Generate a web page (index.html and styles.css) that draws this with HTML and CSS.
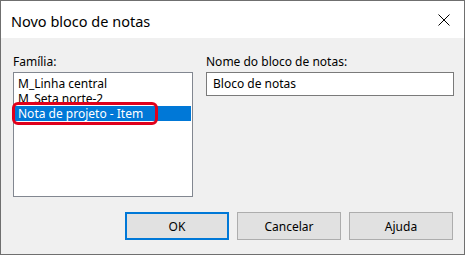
FILE: index.html
```html
<!DOCTYPE html>
<html lang="pt">
<head>
<meta charset="utf-8">
<title>Novo bloco de notas</title>
<link rel="stylesheet" href="styles.css">
</head>
<body>
<div class="window">
  <div class="titlebar">
    <span class="title">Novo bloco de notas</span>
    <svg class="close" width="12" height="12" viewBox="0 0 12 12" aria-hidden="true">
      <path d="M0.5 0.5 L11.5 11.5 M11.5 0.5 L0.5 11.5" stroke="#000" stroke-width="1" fill="none"/>
    </svg>
  </div>
  <div class="body">
    <div class="fields">
      <div class="col">
        <div class="label">Família:</div>
        <div class="listbox">
          <div class="item">M_Linha central</div>
          <div class="item">M_Seta norte-2</div>
          <div class="item selected">Nota de projeto - Item</div>
          <div class="ring"></div>
        </div>
      </div>
      <div class="col">
        <div class="label">Nome do bloco de notas:</div>
        <div class="textbox">Bloco de notas</div>
      </div>
    </div>
    <div class="buttons">
      <div class="button default">OK</div>
      <div class="button">Cancelar</div>
      <div class="button">Ajuda</div>
    </div>
  </div>
</div>
</body>
</html>
```
FILE: styles.css
```css
html, body {
  margin: 0;
  padding: 0;
  background: #ffffff;
}
body {
  font-family: "Noto Sans", "Open Sans", sans-serif;
  font-size: 12px;
  color: #000;
}
.window {
  width: 463px;
  height: 253px;
  border: 1px solid #6f6f6f;
  background: #f0f0f0;
  display: flex;
  flex-direction: column;
}
.titlebar {
  height: 37px;
  background: #ffffff;
  display: flex;
  align-items: center;
  justify-content: space-between;
  padding: 0 14px 0 10px;
  flex: none;
}
.title {
  font-size: 14.5px;
  color: #000;
  margin-top: 2px;
}
.close {
  display: block;
  margin-top: 1px;
}
.body {
  flex: 1;
  padding: 16px 10px 0 12px;
  display: flex;
  flex-direction: column;
}
.fields {
  display: grid;
  grid-template-columns: 180px 248px;
  column-gap: 13px;
}
.label {
  height: 15px;
  line-height: 15px;
  margin-bottom: 3px;
  white-space: nowrap;
}
.listbox {
  position: relative;
  border: 1px solid #828790;
  background: #fff;
  padding: 3px 1px 0 1px;
  box-sizing: border-box;
  height: 125px;
}
.item {
  height: 15px;
  line-height: 15px;
  padding-left: 3px;
  white-space: nowrap;
}
.item.selected {
  background: #0078d7;
  color: #fff;
}
.ring {
  position: absolute;
  left: -2px;
  top: 29px;
  width: 140px;
  height: 17px;
  border: 3px solid #e0001b;
  border-radius: 6px;
}
.textbox {
  height: 24px;
  box-sizing: border-box;
  border: 1px solid #7a7a7a;
  background: #fff;
  padding-left: 6px;
  line-height: 22px;
  white-space: nowrap;
}
.buttons {
  margin-top: 15px;
  display: flex;
  justify-content: flex-end;
  gap: 8px;
  padding-right: 1px;
}
.button {
  width: 104px;
  height: 28px;
  box-sizing: border-box;
  border: 1px solid #adadad;
  background: #e1e1e1;
  display: flex;
  align-items: center;
  justify-content: center;
}
.button.default {
  border: 2px solid #0078d7;
}
```
